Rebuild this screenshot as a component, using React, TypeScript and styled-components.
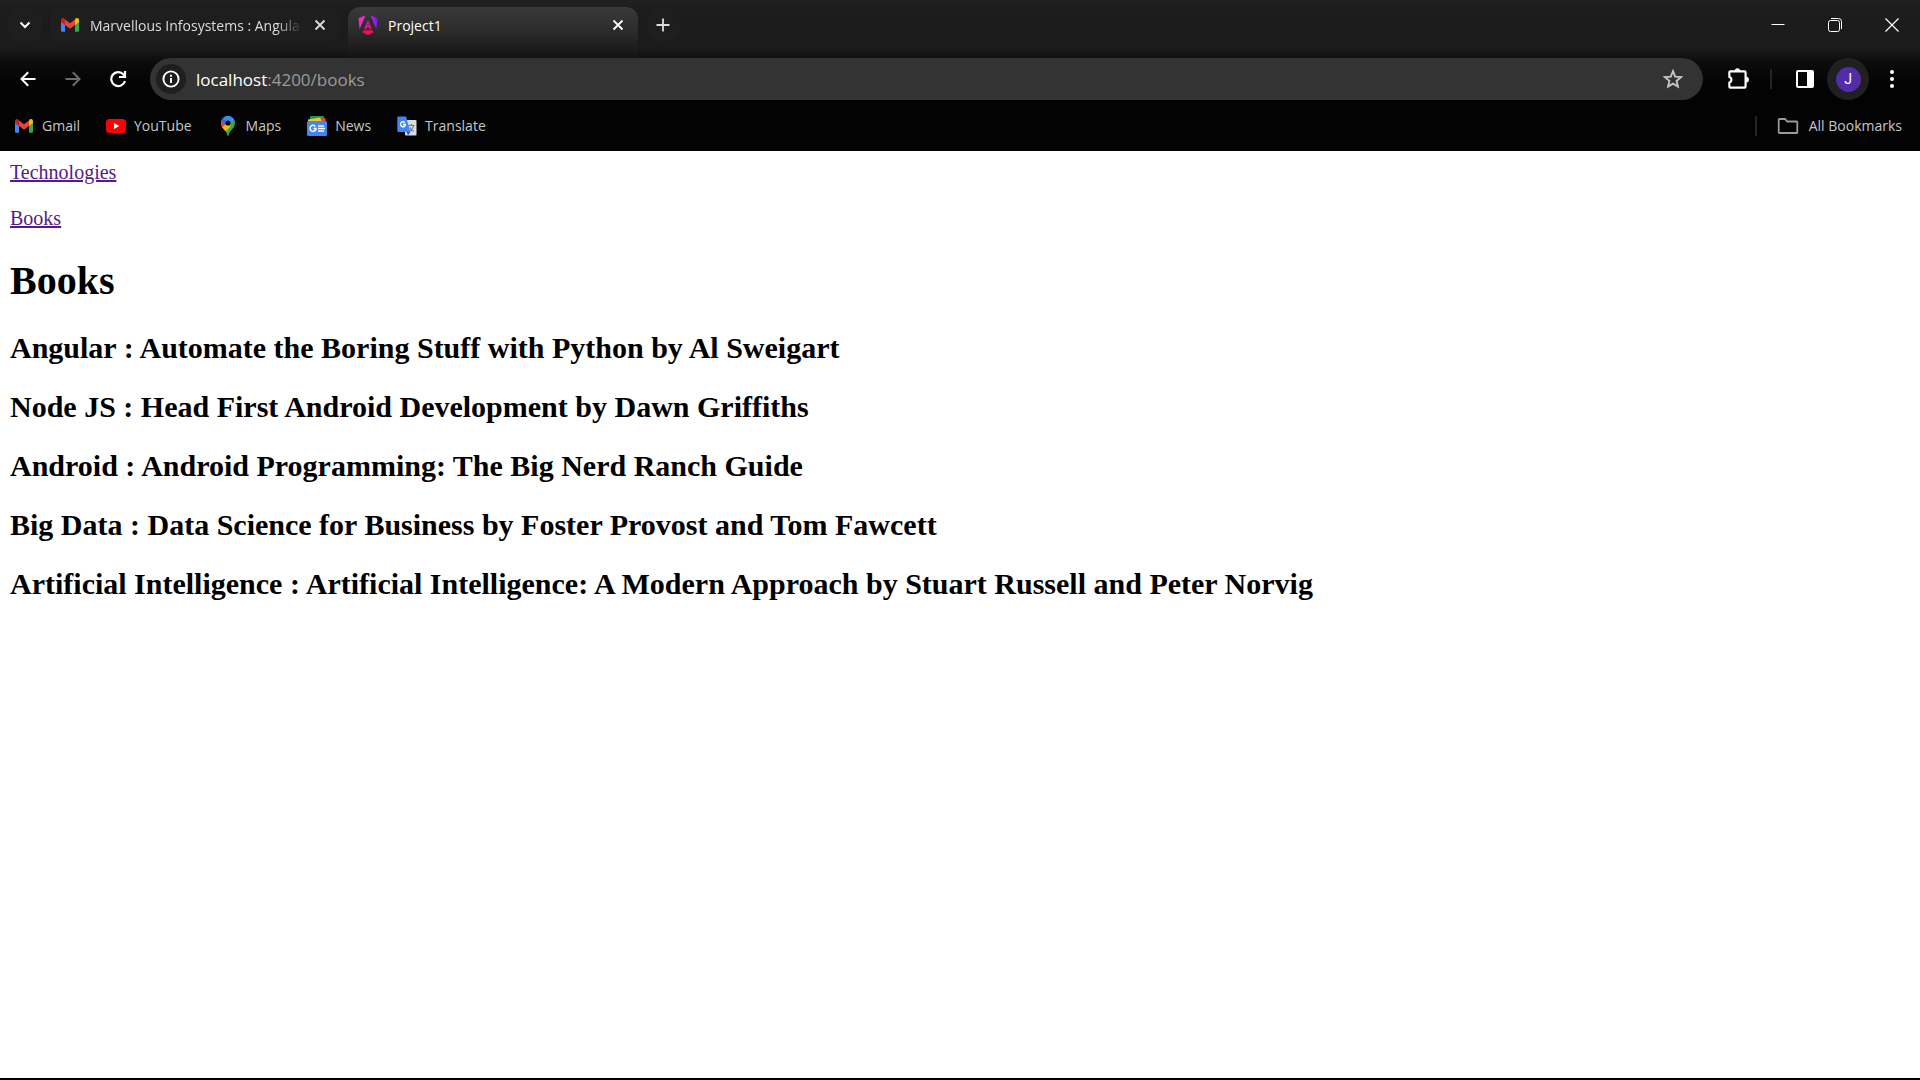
import React from "react";
import styled, { createGlobalStyle } from "styled-components";

const GlobalStyle = createGlobalStyle`
  *, *::before, *::after { box-sizing: border-box; }
  body { margin: 0; background: #fff; }
  button { border: 0; padding: 0; background: none; color: inherit; font: inherit; }
  svg { display: block; flex: none; }
`;

const Window = styled.div`
  display: flex;
  flex-direction: column;
  min-height: 100vh;
  border-bottom: 2px solid #000;
`;

const Chrome = styled.header`
  background: linear-gradient(#202020 0, #1c1c1c 12px, #1b1b1b 48px, #0c0c0c 62px, #030303 84px);
  font-family: "Open Sans", "Noto Sans", sans-serif;
  font-size: 14px;
  line-height: 20px;
  color: #c4c7c5;
`;

const TabStrip = styled.div`
  display: flex;
  align-items: center;
  height: 50px;
  padding-left: 8px;
`;

const TabSearch = styled.button`
  display: grid;
  place-items: center;
  width: 34px;
  height: 34px;
  border-radius: 12px;
  background: #1e1e1e;
  color: #fff;
`;

const Tab = styled.div<{ $active?: boolean }>`
  display: flex;
  align-items: center;
  gap: 10px;
  width: 290px;
  height: ${(p) => (p.$active ? "50px" : "34px")};
  margin-top: ${(p) => (p.$active ? "14px" : "0")};
  margin-left: 8px;
  padding: ${(p) => (p.$active ? "0 12px 14px 10px" : "0 12px 0 10px")};
  border-radius: ${(p) => (p.$active ? "12px 12px 0 0" : "12px")};
  background: ${(p) => (p.$active ? "linear-gradient(#3a3a3a, #2b2b2b 24px, #1e1e1e 40px, #141414)" : "#1e1e1e")};
  color: ${(p) => (p.$active ? "#fff" : "#dcdcdc")};
`;

const TabTitle = styled.span<{ $fade?: boolean }>`
  flex: 1;
  min-width: 0;
  padding-top: 2px;
  overflow: hidden;
  white-space: nowrap;
  mask-image: ${(p) => (p.$fade ? "linear-gradient(90deg, #000 calc(100% - 26px), transparent)" : "none")};
`;

const CloseButton = styled.button`
  display: grid;
  place-items: center;
  width: 16px;
  height: 16px;
`;

const NewTab = styled.button`
  display: grid;
  place-items: center;
  width: 34px;
  height: 34px;
  margin-left: 8px;
  border-radius: 17px;
  background: #1e1e1e;
  color: #dcdcdc;
`;

const WindowControls = styled.div`
  display: flex;
  align-self: stretch;
  margin-left: auto;
  color: #fff;
`;

const WindowButton = styled.button`
  display: grid;
  place-items: center;
  width: 57px;
`;

const Toolbar = styled.div`
  display: flex;
  align-items: center;
  height: 58px;
  padding: 0 6px 0 5px;
  color: #fff;
`;

const ToolButton = styled.button<{ $dim?: boolean }>`
  display: grid;
  place-items: center;
  width: 45px;
  height: 42px;
  color: ${(p) => (p.$dim ? "#6b6b6b" : "inherit")};
`;

const AddressBar = styled.div`
  display: flex;
  flex: 1;
  align-items: center;
  height: 42px;
  margin: 0 12px 0 10px;
  padding: 0 20px 0 6px;
  border-radius: 21px;
  background: #333;
`;

const SiteInfo = styled.button`
  display: grid;
  place-items: center;
  width: 30px;
  height: 30px;
  border-radius: 15px;
  background: #1f1f1f;
`;

const Address = styled.div`
  flex: 1;
  padding-top: 2px;
  margin-left: 10px;
  font-size: 17px;
  line-height: 24px;
  color: #9b9b9b;
`;

const Host = styled.span`
  color: #fff;
`;

const Divider = styled.span<{ $gap: string }>`
  width: 2px;
  height: 20px;
  margin: ${(p) => p.$gap};
  background: #242424;
`;

const Profile = styled.button`
  display: grid;
  place-items: center;
  width: 42px;
  height: 42px;
  border-radius: 21px;
  background: #202020;
`;

const Avatar = styled.span`
  display: grid;
  place-items: center;
  width: 25px;
  height: 25px;
  border-radius: 13px;
  background: #512da8;
  font-family: Roboto, sans-serif;
  font-size: 14px;
`;

const BookmarkBar = styled.nav`
  display: flex;
  align-items: center;
  gap: 26px;
  height: 43px;
  padding: 0 18px 7px 14px;
`;

const Bookmark = styled.a`
  display: flex;
  align-items: center;
  gap: 8px;
  color: inherit;
  text-decoration: none;
`;

const AllBookmarks = styled.div`
  display: flex;
  align-items: center;
  margin-left: auto;
`;

const FolderButton = styled.button`
  display: flex;
  align-items: center;
  gap: 10px;
`;

const Page = styled.main`
  padding: 10px;
  font-family: "Liberation Serif", "Times New Roman", serif;
  font-size: 20px;
  line-height: 22px;
  color: #000;
`;

const PageLink = styled.a`
  display: table;
  margin-bottom: 24px;
  color: #551a8b;
  text-decoration: underline;
`;

const Title = styled.h1`
  margin: 30px 0 28px;
  font-size: 40px;
  line-height: 44px;
`;

const Book = styled.h2`
  margin: 0 0 25px;
  font-size: 30px;
  line-height: 34px;
`;

const GmailIcon = () => (
  <svg width="20" height="20" viewBox="0 0 20 20">
    <path d="M1 6v9.500c0 .8.6 1.300 1.300 1.300H5V9z" fill="#4285f4" />
    <path d="M15 9v7.800h2.700c.7 0 1.300-.5 1.300-1.300V6z" fill="#34a853" />
    <path d="M15 5v5l4-3V5.300c0-2-2-2.800-3.400-1.700z" fill="#fbbc04" />
    <path d="M5 10V4.500l5 3.800 5-3.800V10l-5 3.700z" fill="#ea4335" />
    <path d="M1 5.300V7l4 3V4.500l-.6-.9C3 2.500 1 3.300 1 5.300z" fill="#c5221f" />
  </svg>
);

const AngularIcon = () => (
  <svg width="20" height="20" viewBox="0 0 20 20">
    <defs>
      <linearGradient id="ng" x1="0" y1="0.600" x2="1" y2="0.300">
        <stop offset="0" stopColor="#c22bd8" />
        <stop offset="1" stopColor="#7a14f5" />
      </linearGradient>
    </defs>
    <path d="M7.600.3.500 3.300 1.600 14z" fill="#f22bc3" />
    <path d="M12.400.3l7.100 3L18.400 14z" fill="url(#ng)" />
    <path d="M10 5l3.900 9h-2.200l-.7-1.800H9L8.300 14H6.100zM10 8.200 9.200 10.600h1.600z" fill="#e0189b" fillRule="evenodd" />
    <path d="M5.600 15.200h8.800l1 2.300L10 20l-5.400-2.500z" fill="#f5104a" />
  </svg>
);

const YouTubeIcon = () => (
  <svg width="20" height="20" viewBox="0 0 20 20">
    <rect y="3" width="20" height="14" rx="3.500" fill="#f00" />
    <path d="M8 7l5.200 3L8 13z" fill="#fff" />
  </svg>
);

const MapsIcon = () => (
  <svg width="20" height="20" viewBox="0 0 20 20">
    <clipPath id="pin">
      <path d="M10 0c3.900 0 7 3 7 6.900 0 3.600-2.100 5.200-4 7.600-1.400 1.700-1.900 2.800-2.300 4.700-.2 1-1.200 1-1.400 0C8.900 17.300 8.400 16.200 7 14.500 5.100 12.100 3 10.500 3 6.900 3 3 6.100 0 10 0z" />
    </clipPath>
    <g clipPath="url(#pin)">
      <rect width="20" height="20" fill="#34a853" />
      <path d="M0 0h13L4 11H0z" fill="#1a73e8" />
      <path d="M0 3l9 6-5 4H0z" fill="#ea4335" />
      <path d="M3 12l10-8-1 7-6 6z" fill="#fbbc04" />
      <path d="M6 0h12v3l-7 5-5-5z" fill="#4285f4" />
    </g>
    <circle cx="10" cy="7" r="2.600" fill="#0b0b0b" />
  </svg>
);

const NewsIcon = () => (
  <svg width="20" height="20" viewBox="0 0 20 20">
    <rect x="3" y="0" width="14" height="6" rx="1" fill="#0f9d58" />
    <path d="M9 3l9.500-1v4H9z" fill="#ea4335" />
    <path d="M1 3.500 13 1.500l2 4H1z" fill="#fbc02d" />
    <rect y="5" width="20" height="15" rx="1.500" fill="#4285f4" />
    <path d="M8.300 10.400a3 3 0 1 0 .7 2.200H6.500" fill="none" stroke="#fff" strokeWidth="1.500" />
    <path d="M11 10h6M11 12.500h7M11 15h6" stroke="#fff" strokeWidth="1.400" />
  </svg>
);

const TranslateIcon = () => (
  <svg width="20" height="20" viewBox="0 0 20 20">
    <rect x="8" y="4" width="11.500" height="15.500" rx="1" fill="#dadce0" />
    <path d="M11.500 9.500h6M14.500 8v1.500M16.500 10c-.5 2.500-2 4.300-4 5.500M12.800 11.500c1 1.800 2 3 4 4" fill="none" stroke="#6f7a85" strokeWidth="1.100" />
    <path d="M1.500 0.500H9L13.500 16H1.500A1.200 1.200 0 0 1 .3 14.800V1.700C.3 1 .8.500 1.500.500z" fill="#4285f4" />
    <path d="M9.500 16h4L11 19.300z" fill="#2a56c6" />
    <path d="M7.800 6.500a2.500 2.500 0 1 0 .7 2H6" fill="none" stroke="#fff" strokeWidth="1.300" />
  </svg>
);

const CloseIcon = () => (
  <svg width="12" height="12" viewBox="0 0 12 12">
    <path d="M1.500 1.500l9 9M10.500 1.500l-9 9" stroke="currentColor" strokeWidth="1.800" />
  </svg>
);

const bookmarks = [
  { name: "Gmail", Icon: GmailIcon },
  { name: "YouTube", Icon: YouTubeIcon },
  { name: "Maps", Icon: MapsIcon },
  { name: "News", Icon: NewsIcon },
  { name: "Translate", Icon: TranslateIcon },
];

const books = [
  "Angular : Automate the Boring Stuff with Python by Al Sweigart",
  "Node JS : Head First Android Development by Dawn Griffiths",
  "Android : Android Programming: The Big Nerd Ranch Guide",
  "Big Data : Data Science for Business by Foster Provost and Tom Fawcett",
  "Artificial Intelligence : Artificial Intelligence: A Modern Approach by Stuart Russell and Peter Norvig",
];

export default function App() {
  return (
    <Window>
      <GlobalStyle />
      <Chrome>
        <TabStrip>
          <TabSearch aria-label="Search tabs">
            <svg width="12" height="12" viewBox="0 0 12 12">
              <path d="M1.500 3.500 6 8l4.500-4.500" fill="none" stroke="currentColor" strokeWidth="2" />
            </svg>
          </TabSearch>
          <Tab>
            <GmailIcon />
            <TabTitle $fade>Marvellous Infosystems : Angular</TabTitle>
            <CloseButton aria-label="Close tab"><CloseIcon /></CloseButton>
          </Tab>
          <Tab $active>
            <AngularIcon />
            <TabTitle>Project1</TabTitle>
            <CloseButton aria-label="Close tab"><CloseIcon /></CloseButton>
          </Tab>
          <NewTab aria-label="New tab">
            <svg width="14" height="14" viewBox="0 0 14 14">
              <path d="M7 .5v13M.5 7h13" stroke="currentColor" strokeWidth="1.800" />
            </svg>
          </NewTab>
          <WindowControls>
            <WindowButton aria-label="Minimize">
              <svg width="14" height="14" viewBox="0 0 14 14"><path d="M.5 6.500h13" stroke="currentColor" /></svg>
            </WindowButton>
            <WindowButton aria-label="Restore">
              <svg width="14" height="14" viewBox="0 0 14 14" fill="none" stroke="currentColor">
                <rect x=".5" y="2.500" width="11" height="11" rx="2" />
                <path d="M3 .5h7.500a3 3 0 0 1 3 3V11" />
              </svg>
            </WindowButton>
            <WindowButton aria-label="Close">
              <svg width="14" height="14" viewBox="0 0 14 14"><path d="M.5.5l13 13M13.500.5l-13 13" stroke="currentColor" strokeWidth="1.200" /></svg>
            </WindowButton>
          </WindowControls>
        </TabStrip>

        <Toolbar>
          <ToolButton aria-label="Back">
            <svg width="16" height="16" viewBox="0 0 16 16" fill="none" stroke="currentColor" strokeWidth="2">
              <path d="M15.500 8H2M8.200 1.200 1.500 8l6.700 6.800" />
            </svg>
          </ToolButton>
          <ToolButton aria-label="Forward" $dim>
            <svg width="16" height="16" viewBox="0 0 16 16" fill="none" stroke="currentColor" strokeWidth="2">
              <path d="M.5 8H14M7.800 1.200 14.500 8l-6.700 6.800" />
            </svg>
          </ToolButton>
          <ToolButton aria-label="Reload">
            <svg width="18" height="18" viewBox="0 0 18 18" fill="none" stroke="currentColor" strokeWidth="2.200">
              <path d="M16 11a7 7 0 1 1-1.500-6.600L16 6M16 1v6h-6" />
            </svg>
          </ToolButton>
          <AddressBar>
            <SiteInfo aria-label="View site information">
              <svg width="18" height="18" viewBox="0 0 18 18" fill="none" stroke="currentColor" strokeWidth="1.900">
                <circle cx="9" cy="9" r="7.600" />
                <path d="M9 8v5M9 4.800v1.900" />
              </svg>
            </SiteInfo>
            <Address><Host>localhost</Host>:4200/books</Address>
            <button aria-label="Bookmark this tab">
              <svg width="20" height="20" viewBox="0 0 20 20" fill="none" stroke="#c4c7c5" strokeWidth="1.900">
                <path d="M10 2.200l2.200 5.400 5.800.5-4.400 3.800 1.300 5.700-4.900-3-4.900 3 1.300-5.700L2 8.100l5.800-.5z" />
              </svg>
            </button>
          </AddressBar>
          <ToolButton aria-label="Extensions">
            <svg width="26" height="26" viewBox="0 0 24 24">
              <path d="M4 6a1 1 0 0 1 1-1h13a1 1 0 0 1 1 1v13a1 1 0 0 1-1 1H5a1 1 0 0 1-1-1v-3.800a2.600 2.600 0 0 0 0-5z" fill="#060606" stroke="#fff" strokeWidth="2" strokeLinejoin="round" />
              <path d="M9 4.500a2.500 2.500 0 0 1 5 0zM19.500 10a2.600 2.600 0 0 1 0 5.200z" fill="#fff" />
            </svg>
          </ToolButton>
          <Divider $gap="0 10px" />
          <ToolButton aria-label="Side panel">
            <svg width="20" height="20" viewBox="0 0 20 20">
              <rect x="2" y="2" width="16" height="16" rx="1" fill="none" stroke="currentColor" strokeWidth="2" />
              <path d="M12 2h6v16h-6z" fill="currentColor" />
            </svg>
          </ToolButton>
          <Profile aria-label="Profile"><Avatar>J</Avatar></Profile>
          <ToolButton aria-label="Menu">
            <svg width="20" height="20" viewBox="0 0 20 20" fill="currentColor">
              <circle cx="10" cy="3" r="2" />
              <circle cx="10" cy="10" r="2" />
              <circle cx="10" cy="17" r="2" />
            </svg>
          </ToolButton>
        </Toolbar>

        <BookmarkBar>
          {bookmarks.map(({ name, Icon }) => (
            <Bookmark href="#" key={name}><Icon />{name}</Bookmark>
          ))}
          <AllBookmarks>
            <Divider $gap="0 20px 0 0" />
            <FolderButton>
              <svg width="22" height="18" viewBox="0 0 22 18" fill="none" stroke="#9a9a9a" strokeWidth="1.800">
                <path d="M2.500 2H8l2.200 2.500h9.300a.8.8 0 0 1 .8.8v9.900a.8.8 0 0 1-.8.8h-17a.8.8 0 0 1-.8-.8V2.800a.8.8 0 0 1 .8-.8z" />
              </svg>
              All Bookmarks
            </FolderButton>
          </AllBookmarks>
        </BookmarkBar>
      </Chrome>

      <Page>
        <PageLink href="#technologies">Technologies</PageLink>
        <PageLink href="#books">Books</PageLink>
        <Title>Books</Title>
        {books.map((book) => <Book key={book}>{book}</Book>)}
      </Page>
    </Window>
  );
}
